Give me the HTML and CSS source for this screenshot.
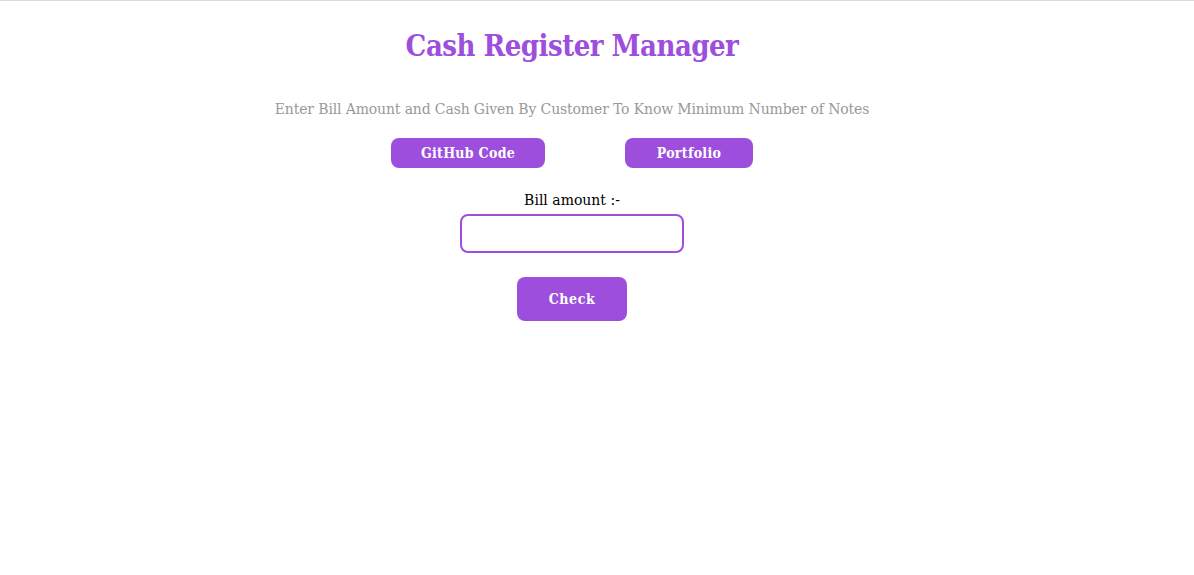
FILE: index.html
```html
<!DOCTYPE html>
<html lang="en">
<head>
<meta charset="utf-8">
<title>Cash Register Manager</title>
<link rel="stylesheet" href="styles.css">
</head>
<body>
<main class="page">
  <h1 class="title">Cash Register Manager</h1>
  <p class="subtitle">Enter Bill Amount and Cash Given By Customer To Know Minimum Number of Notes</p>
  <div class="links">
    <a class="link-btn github" href="#">GitHub Code</a>
    <a class="link-btn portfolio" href="#">Portfolio</a>
  </div>
  <label class="label" for="bill">Bill amount :-</label>
  <input class="input" id="bill" type="text">
  <button class="check">Check</button>
</main>
</body>
</html>
```
FILE: styles.css
```css
html, body {
  margin: 0;
  padding: 0;
  background: #fff;
}
body {
  border-top: 1px solid #dcdcdc;
  font-family: "DejaVu Serif", serif;
}
.page {
  width: 1144px;
  display: flex;
  flex-direction: column;
  align-items: center;
}
.title {
  margin: 26px 0 0;
  font-family: "DejaVu Serif Condensed", "DejaVu Serif", serif;
  font-size: 29px;
  line-height: 38px;
  font-weight: bold;
  color: #9d4edd;
  letter-spacing: -0.5px;
}
.subtitle {
  margin: 34px 0 0;
  font-size: 14px;
  line-height: 20px;
  color: #999;
  letter-spacing: -0.14px;
}
.links {
  margin-top: 19px;
  display: flex;
  gap: 80px;
}
.link-btn {
  display: flex;
  align-items: center;
  justify-content: center;
  height: 30px;
  border-radius: 8px;
  background: #9d4edd;
  color: #fff;
  text-decoration: none;
  font-family: "DejaVu Serif Condensed", "DejaVu Serif", serif;
  font-weight: bold;
  font-size: 14px;
  letter-spacing: 0.3px;
}
.github { width: 154px; }
.portfolio { width: 128px; }
.label {
  margin-top: 22px;
  font-size: 14px;
  line-height: 20px;
  color: #000;
}
.input {
  margin-top: 4px;
  box-sizing: border-box;
  width: 224px;
  height: 39px;
  border: 2px solid #9d4edd;
  border-radius: 8px;
  outline: none;
  background: #fff;
}
.check {
  margin-top: 24px;
  width: 110px;
  height: 44px;
  border: none;
  border-radius: 8px;
  background: #9d4edd;
  color: #fff;
  font-family: "DejaVu Serif Condensed", "DejaVu Serif", serif;
  font-weight: bold;
  font-size: 14px;
  letter-spacing: 0.6px;
}
```
